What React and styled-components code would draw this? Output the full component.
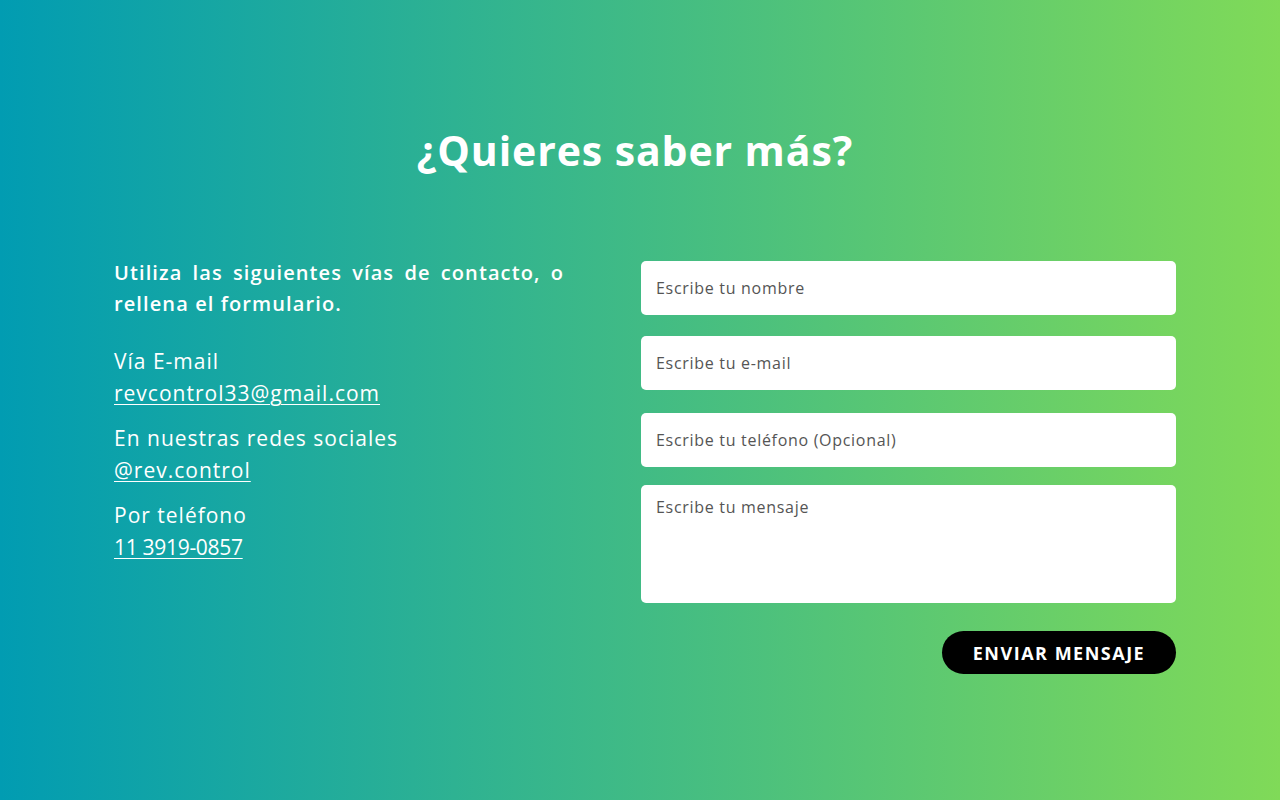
import React from "react";
import styled, { createGlobalStyle } from "styled-components";

const Global = createGlobalStyle`
  html, body { margin: 0; padding: 0; }
  body { font-family: "Open Sans", "Liberation Sans", sans-serif; }
  * { box-sizing: border-box; }
`;

const Section = styled.section`
  width: 1280px;
  height: 800px;
  background: linear-gradient(90deg, #019cb2 0%, #80da58 100%);
  color: #fff;
  padding: 123px 104px 0 114px;
`;

const Title = styled.h2`
  margin: 0 0 84px;
  text-align: center;
  font-size: 41px;
  line-height: 54px;
  font-weight: 700;
  letter-spacing: 0.9px;
  padding-right: 20px;
`;

const Grid = styled.div`
  display: grid;
  grid-template-columns: 450px 535px;
  column-gap: 77px;
  align-items: start;
`;

const Info = styled.div`
  display: flex;
  flex-direction: column;
`;

const Intro = styled.p`
  margin: -4px 0 26px;
  font-size: 20px;
  line-height: 31px;
  font-weight: 600;
  letter-spacing: 1.1px;
  text-align: justify;
`;

const Block = styled.div`
  display: flex;
  flex-direction: column;
  margin-bottom: 13px;
  font-size: 21px;
  line-height: 32px;
  letter-spacing: 1px;
`;

const Label = styled.span``;

const Link = styled.a`
  color: #fff;
  text-decoration: underline;
  text-underline-offset: 3px;
  text-decoration-thickness: 1px;
  align-self: flex-start;
  letter-spacing: ${(p) => (p.$tight ? "-0.3px" : "inherit")};
`;

const Form = styled.form`
  display: flex;
  flex-direction: column;
`;

const Field = styled.input`
  height: 54px;
  width: 100%;
  border: none;
  border-radius: 5px;
  background: #fff;
  padding: 0 15px;
  font-family: inherit;
  font-size: 16px;
  letter-spacing: 0.7px;
  color: #333;
  margin-bottom: ${(p) => p.$gap}px;
  outline: none;
  &::placeholder { color: #555; }
`;

const Area = styled.textarea`
  height: 118px;
  width: 100%;
  border: none;
  border-radius: 5px;
  background: #fff;
  padding: 11px 15px;
  font-family: inherit;
  font-size: 16px;
  letter-spacing: 0.7px;
  line-height: 22px;
  resize: none;
  outline: none;
  margin-bottom: 28px;
  &::placeholder { color: #555; }
`;

const Submit = styled.button`
  align-self: flex-end;
  height: 43px;
  width: 234px;
  border: none;
  border-radius: 22px;
  background: #000;
  color: #fff;
  font-family: inherit;
  font-size: 18px;
  font-weight: 700;
  letter-spacing: 1.5px;
  cursor: pointer;
`;

export default function App() {
  return (
    <>
      <Global />
      <Section>
        <Title>¿Quieres saber más?</Title>
        <Grid>
          <Info>
            <Intro>Utiliza las siguientes vías de contacto, o rellena el formulario.</Intro>
            <Block>
              <Label>Vía E-mail</Label>
              <Link href="#">revcontrol33@gmail.com</Link>
            </Block>
            <Block>
              <Label>En nuestras redes sociales</Label>
              <Link href="#">@rev.control</Link>
            </Block>
            <Block>
              <Label>Por teléfono</Label>
              <Link href="#" $tight>11 3919-0857</Link>
            </Block>
          </Info>
          <Form onSubmit={(e) => e.preventDefault()}>
            <Field $gap={21} placeholder="Escribe tu nombre" />
            <Field $gap={23} placeholder="Escribe tu e-mail" />
            <Field $gap={18} placeholder="Escribe tu teléfono (Opcional)" />
            <Area placeholder="Escribe tu mensaje" />
            <Submit type="submit">ENVIAR MENSAJE</Submit>
          </Form>
        </Grid>
      </Section>
    </>
  );
}
